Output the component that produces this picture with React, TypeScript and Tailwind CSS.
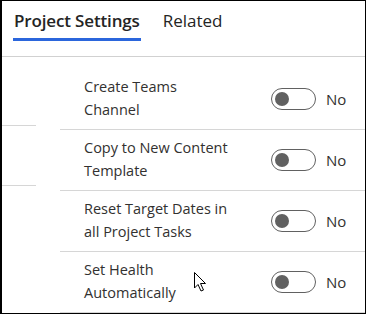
import React from "react";

const ROWS: string[][] = [
  ["Create Teams", "Channel"],
  ["Copy to New Content", "Template"],
  ["Reset Target Dates in", "all Project Tasks"],
  ["Set Health", "Automatically"],
];

function Toggle() {
  return (
    <div className="w-[45px] h-[22px] rounded-full border border-[#616161] flex items-center pl-[3px] shrink-0">
      <div className="w-[14px] h-[14px] rounded-full bg-[#616161]" />
    </div>
  );
}

function Cursor() {
  return (
    <svg
      className="absolute left-[191px] top-[270px]"
      width="16"
      height="22"
      viewBox="0 0 16 22"
    >
      <path
        d="M1.5 1.5 L1.5 17 L5 13.5 L8 20 L10.5 19 L7.5 12.5 L12.5 12.5 Z"
        fill="#fff"
        stroke="#000"
        strokeWidth="1"
        strokeLinejoin="miter"
      />
    </svg>
  );
}

export default function App() {
  return (
    <div
      className="relative w-[366px] h-[314px] overflow-hidden bg-white border-t border-r border-b border-l-2 border-black text-[#323130]"
      style={{ fontFamily: '"Open Sans", "Noto Sans", sans-serif' }}
    >
      {/* Tabs */}
      <div className="h-[56px] flex items-start gap-[22px] pl-[11px] pt-[7px] border-b border-[#d1d1d1]">
        <div className="flex flex-col">
          <span className="text-[17px] leading-[26px] font-semibold text-[#242424] px-[1px] tracking-[-0.15px]">
            Project Settings
          </span>
          <div className="mt-[4px] h-[3px] bg-[#2b66dc]" />
        </div>
        <span className="text-[17px] leading-[26px] text-[#242424]">Related</span>
      </div>

      <div className="flex">
        {/* left column, cut off */}
        <div className="w-[34px] shrink-0">
          <div className="h-[69px] border-b border-[#d6d6d6]" />
          <div className="h-[60px] border-b border-[#d6d6d6]" />
        </div>

        {/* settings rows */}
        <div className="ml-[24px] flex-1 pt-[12px]">
          {ROWS.map((lines, i) => (
            <div
              key={i}
              className="h-[61px] flex items-center border-b border-[#d6d6d6] pl-[24px]"
            >
              <div className="w-[187px] text-[14.5px] leading-[23px] pb-[2px]">
                {lines.map((l) => (
                  <div key={l}>{l}</div>
                ))}
              </div>
              <Toggle />
              <span className="ml-[10px] text-[15px]">No</span>
            </div>
          ))}
        </div>
      </div>

      <Cursor />
    </div>
  );
}
